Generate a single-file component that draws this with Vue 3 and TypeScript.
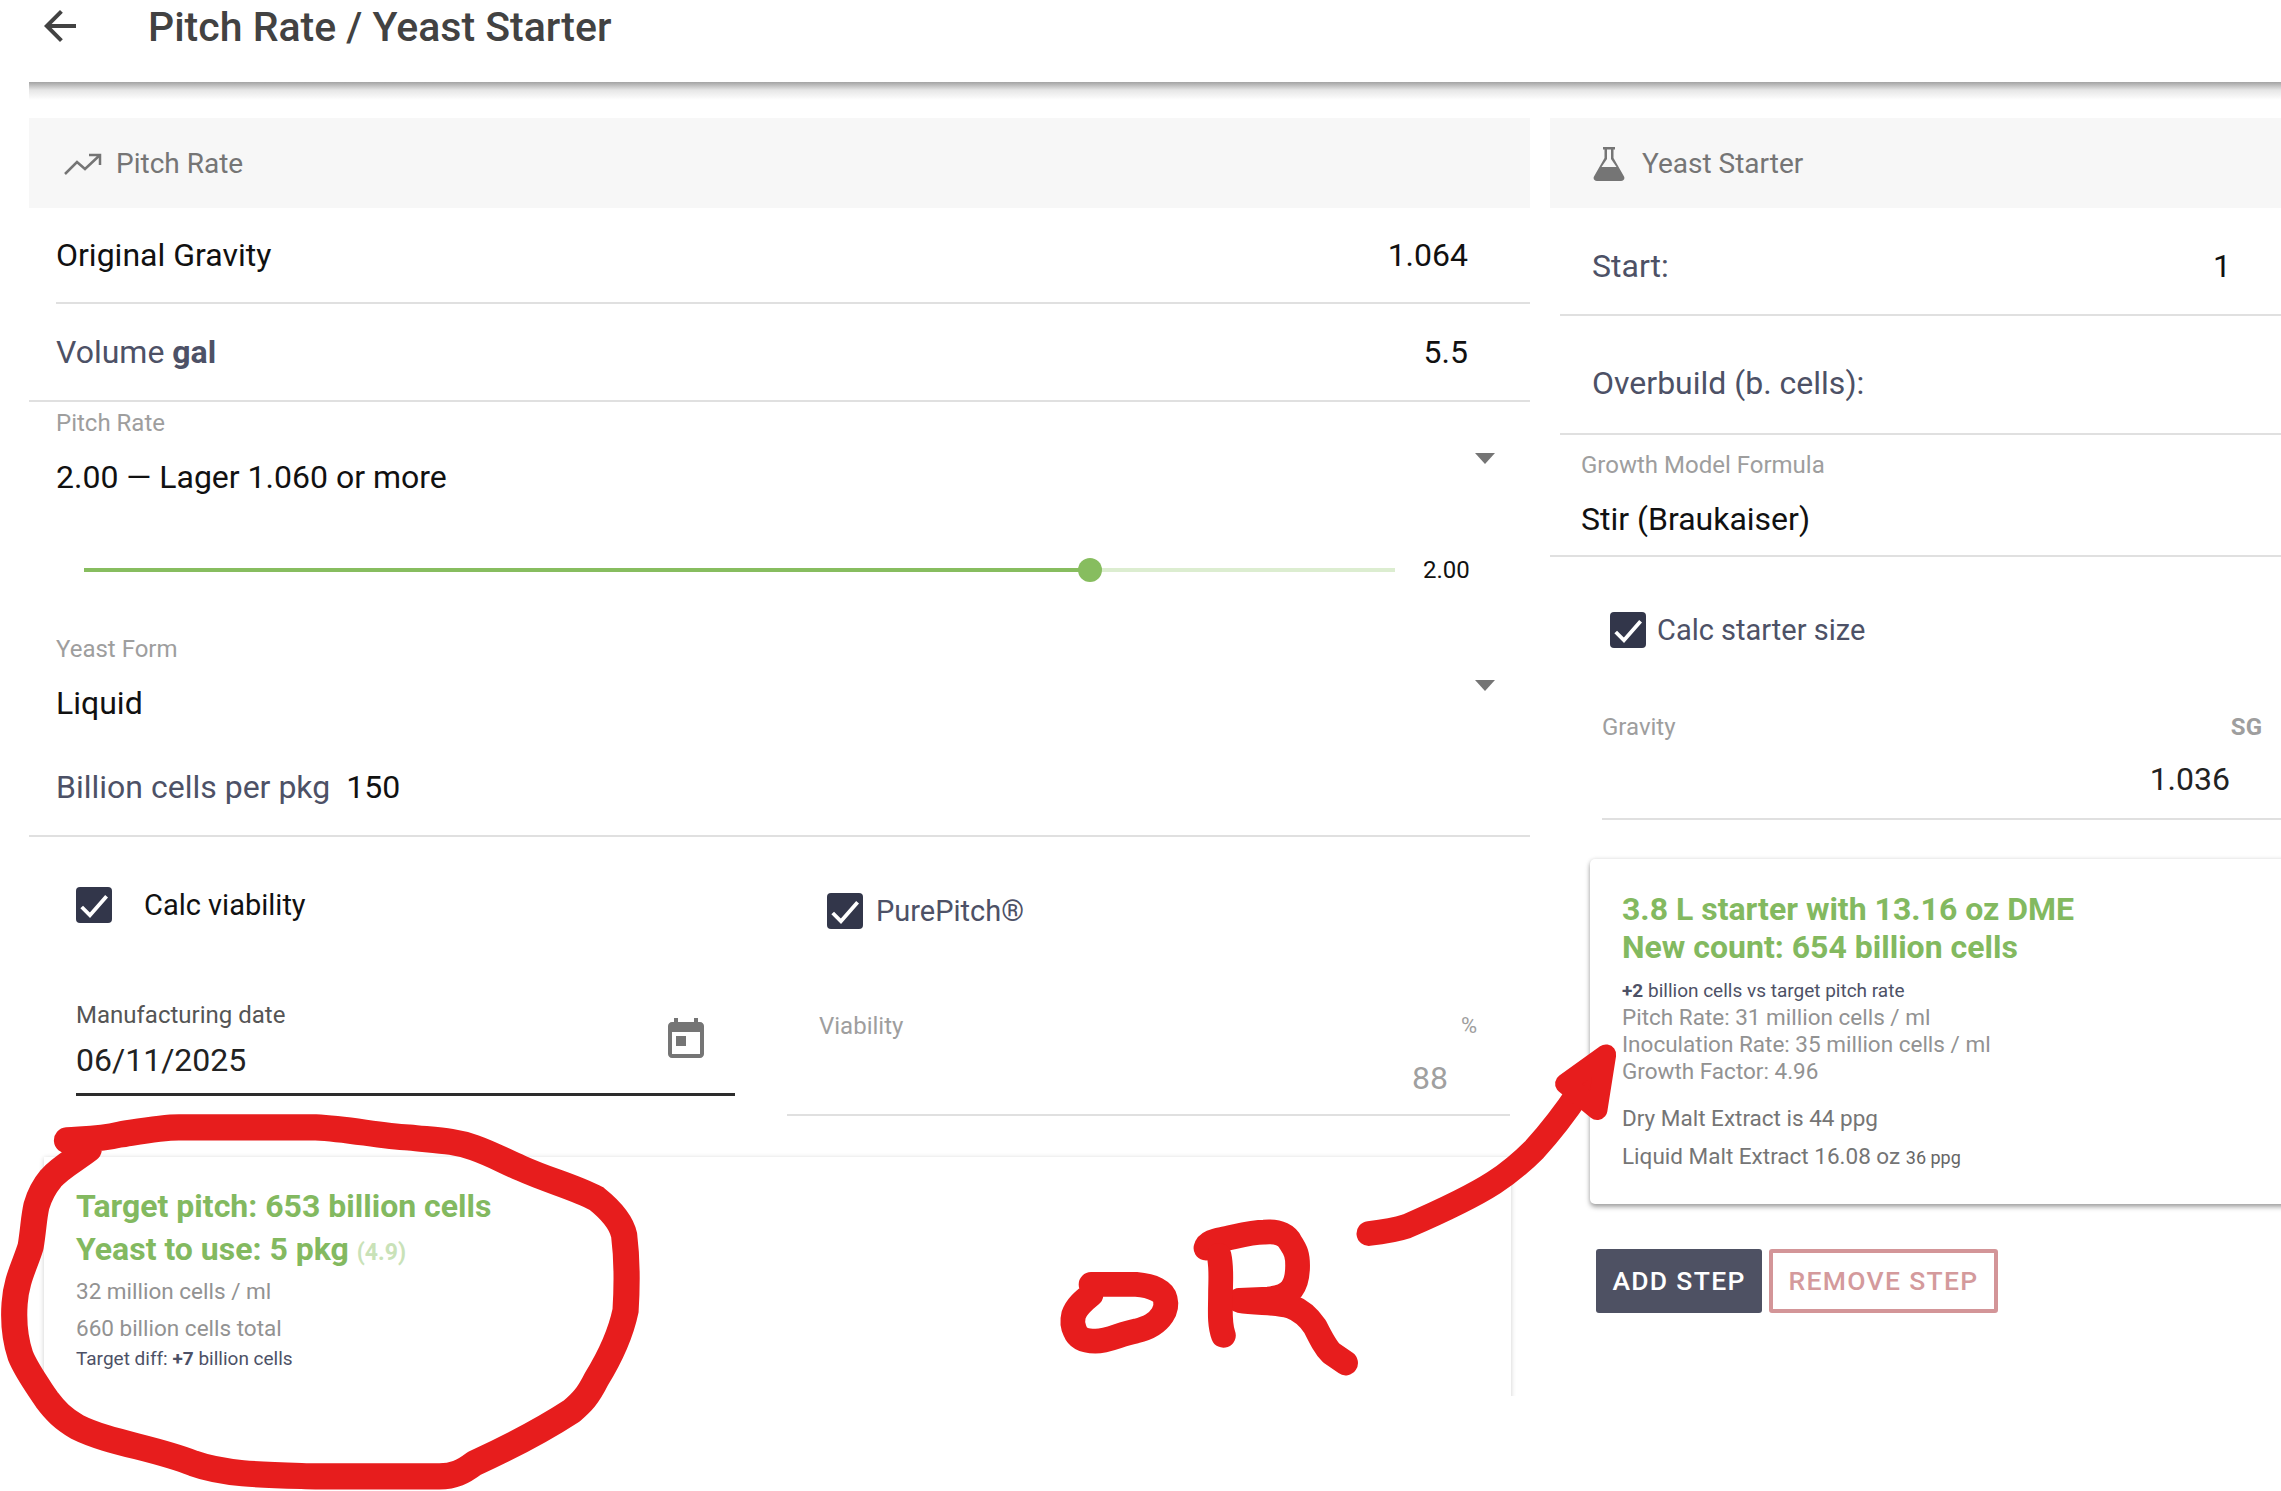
<template>
  <div class="page">
    <header class="toolbar">
      <svg class="back" viewBox="0 0 24 24"><path d="M20 11H7.83l5.59-5.59L12 4l-8 8 8 8 1.41-1.41L7.83 13H20v-2z" /></svg>
      <h1>Pitch Rate / Yeast Starter</h1>
    </header>
    <div class="toolbar-shadow"></div>

    <main class="columns">
      <section class="left">
        <div class="panel-head">
          <svg class="trend" viewBox="0 0 38 22" fill="none"><path d="M1 21l12-12 8 7L36 2M25 2h11v10" /></svg>
          <span>Pitch Rate</span>
        </div>

        <div class="row row-gravity">
          <span class="dark">Original Gravity</span>
          <span class="dark">1.064</span>
        </div>
        <div class="row row-volume">
          <span>Volume <b>gal</b></span>
          <span class="dark">5.5</span>
        </div>

        <div class="select pitch">
          <label class="small">Pitch Rate</label>
          <div class="select-value">2.00 — Lager 1.060 or more</div>
          <i class="caret"></i>
        </div>
        <div class="slider">
          <div class="track">
            <div class="track-on" :style="{ width: sliderPct + '%' }"></div>
            <div class="thumb" :style="{ left: sliderPct + '%' }"></div>
          </div>
          <span class="slider-val">2.00</span>
        </div>
        <div class="select form">
          <label class="small">Yeast Form</label>
          <div class="select-value">Liquid</div>
          <i class="caret"></i>
        </div>
        <div class="cells">Billion cells per pkg <span class="dark pkg">150</span></div>

        <div class="viability">
          <div class="cell">
            <div class="check-line calc">
              <span class="box"><svg viewBox="0 0 24 24"><path d="M3.800 13.300l5.500 5.600L20.400 6.200" /></svg></span>
              <span class="dark calc-label">Calc viability</span>
            </div>
            <div class="date">
              <label>Manufacturing date</label>
              <div class="date-value">06/11/2025</div>
              <svg class="calendar" viewBox="0 0 24 24"><path d="M19 4h-1V2h-2v2H8V2H6v2H5c-1.1 0-2 .9-2 2v14c0 1.1.9 2 2 2h14c1.1 0 2-.9 2-2V6c0-1.1-.9-2-2-2zm0 16H5V9h14v11zM7 11h5v5H7z" /></svg>
            </div>
          </div>
          <div class="cell">
            <div class="check-line pure">
              <span class="box"><svg viewBox="0 0 24 24"><path d="M3.800 13.300l5.500 5.600L20.400 6.200" /></svg></span>
              <span>PurePitch®</span>
            </div>
            <div class="via-field">
              <div class="via-labels"><span>Viability</span><span class="unit">%</span></div>
              <div class="via-value">88</div>
            </div>
          </div>
        </div>

        <div class="card result">
          <div class="green">Target pitch: 653 billion cells</div>
          <div class="green">Yeast to use: 5 pkg <small>(4.9)</small></div>
          <p class="grey first">32 million cells / ml</p>
          <p class="grey second">660 billion cells total</p>
          <p class="diff">Target diff: <b>+7</b> billion cells</p>
        </div>
      </section>

      <section class="right">
        <div class="panel-head">
          <svg class="flask" viewBox="0 0 32 34"><path d="M10 0h12v2.500h-1.500V11L31 29.500c1.200 2.400-.4 4.500-3 4.500H4c-2.600 0-4.200-2.100-3-4.500L11.500 11V2.500H10zM14 2.500V12L8.500 20h15L18 12V2.500z" fill-rule="evenodd" /></svg>
          <span>Yeast Starter</span>
        </div>

        <div class="row row-start"><span>Start:</span><span class="dark">1</span></div>
        <div class="row row-over"><span>Overbuild (b. cells):</span></div>
        <div class="formula">
          <label class="small">Growth Model Formula</label>
          <div class="select-value">Stir (Braukaiser)</div>
        </div>

        <div class="check-line starter">
          <span class="box"><svg viewBox="0 0 24 24"><path d="M3.800 13.300l5.500 5.600L20.400 6.200" /></svg></span>
          <span>Calc starter size</span>
        </div>

        <div class="sg-field">
          <div class="via-labels"><span>Gravity</span><b>SG</b></div>
          <div class="sg-value">1.036</div>
        </div>

        <div class="card starter-card">
          <div class="green">3.8 L starter with 13.16 oz DME</div>
          <div class="green">New count: 654 billion cells</div>
          <p class="vs"><b>+2</b> billion cells vs target pitch rate</p>
          <p v-for="line in rateLines" :key="line" class="grey rate">{{ line }}</p>
          <p class="malt dry">Dry Malt Extract is 44 ppg</p>
          <p class="malt">Liquid Malt Extract 16.08 oz <small>36 ppg</small></p>
        </div>

        <div class="actions">
          <button class="btn add">ADD STEP</button>
          <button class="btn remove">REMOVE STEP</button>
        </div>
      </section>
    </main>

    <!-- red marker scribbled over the screenshot -->
    <svg class="marker" viewBox="0 0 1568 1025" fill="none">
      <path stroke-width="18" d="M46 784 C60 783 70 783 82 780 C95 778 110 775 123 775 L217 775 C240 776 260 781 281 782 C300 784 312 784 326 789 C340 794 348 799 358 803 C378 812 395 816 410 824 C420 832 427 840 429 849 C431 865 431 885 430 901 C426 920 418 935 410 948 C404 960 400 964 393 970 C370 985 350 995 326 1006 C318 1012 312 1015 302 1015 L217 1015 C185 1014 155 1014 133 1006 C105 995 75 992 53 981 C43 975 38 970 32 962 C24 950 18 942 14 932 C10 920 9 910 10 896 C11 880 17 870 21 857 C23 845 23 838 25 829 C27 822 30 816 35 810 C42 802 52 797 61 790" />
      <path stroke-width="17" d="M750 883 L781 883 C793 884 800 888 801 893 C802 897 801 901 799 904 C795 910 790 913 781 915 C770 917 762 922 753 922 C745 922 741 920 739 915 C737 911 737 908 738 904 C740 898 745 894 750 890" />
      <path stroke-width="17" d="M829 858 C830 854 835 853 840 852 C850 850 860 847 869 847 C880 846 885 850 887 854 C891 860 892 863 892 870 C892 877 891 882 888 886 C885 890 880 892 872 893 L852 894 C865 896 878 895 887 898 C895 901 900 906 904 912 C908 920 911 926 915 930 L925 937" />
      <path stroke-width="17" d="M838 863 C840 872 839 880 839 890 C839 900 838 910 841 918" />
      <path stroke-width="17" d="M941 848 C950 847 958 846 967 843 C990 833 1010 824 1027 813 C1038 806 1046 799 1055 790 C1066 778 1076 765 1086 750 L1097 733" />
      <path class="arrow-head" stroke-width="14" d="M1104 725 L1076 745 L1098 763 Z" />
    </svg>
  </div>
</template>

<script setup lang="ts">
const sliderPct = 76.7

const rateLines: string[] = [
  'Pitch Rate: 31 million cells / ml',
  'Inoculation Rate: 35 million cells / ml',
  'Growth Factor: 4.96',
]
</script>

<style>
html,
body {
  margin: 0;
  background: #fff;
}
</style>

<style scoped>
.page {
  position: relative;
  width: 2281px;
  height: 1491px;
  box-sizing: border-box;
  padding-left: 29px;
  overflow: hidden;
  background: #fff;
  font-family: Roboto, "Liberation Sans", sans-serif;
  font-size: 32px;
  color: #4d5166;
}

.toolbar {
  display: flex;
  align-items: flex-start;
  height: 82px;
  color: #424242;
}
.back {
  width: 48px;
  height: 48px;
  margin: 2px 0 0 7px;
  fill: #424242;
}
h1 {
  margin: 1px 0 0 64px;
  font-size: 41px;
  font-weight: 500;
  line-height: 52px;
}
.toolbar-shadow {
  height: 18px;
  background: linear-gradient(#a3a3a3, #e6e6e6 45%, #fff);
}

.columns {
  display: flex;
  gap: 20px;
  margin-top: 18px;
  height: 1278px;
}
.left {
  flex: 0 0 1501px;
  overflow: hidden;
}
.right {
  flex: 1;
  min-width: 0;
}

.panel-head {
  display: flex;
  align-items: center;
  height: 90px;
  background: #f7f7f7;
  color: #757575;
  font-size: 28px;
}
.trend {
  width: 38px;
  height: 22px;
  margin: 2px 14px 0 35px;
  stroke: #757575;
  stroke-width: 2.5;
}
.flask {
  flex: none;
  width: 32px;
  height: 34px;
  margin: 2px 17px 0 43px;
  fill: #757575;
}

.dark {
  color: #111;
}
b {
  font-weight: 700;
}

.row {
  display: flex;
  align-items: center;
  justify-content: space-between;
  box-sizing: border-box;
  border-bottom: 2px solid #e0e0e0;
}
.row-gravity {
  height: 96px;
  margin-left: 27px;
  padding: 0 62px 1px 0;
}
.row-volume {
  height: 98px;
  padding: 0 62px 0 27px;
}

.small {
  display: block;
  color: #9e9e9e;
  font-size: 24px;
  line-height: 40px;
}
.select {
  position: relative;
  padding-left: 27px;
}
.pitch {
  padding-top: 1px;
}
.select-value {
  color: #111;
  font-size: 32px;
  line-height: 68px;
}
.caret {
  position: absolute;
  top: 51px;
  right: 35px;
  border-left: 10px solid transparent;
  border-right: 10px solid transparent;
  border-top: 11px solid #757575;
}

.slider {
  display: flex;
  align-items: center;
  height: 118px;
  padding-left: 55px;
}
.track {
  position: relative;
  width: 1311px;
  height: 4px;
  background: #dcedd0;
}
.track-on {
  height: 100%;
  background: #87bd5f;
}
.thumb {
  position: absolute;
  top: -10px;
  width: 24px;
  height: 24px;
  margin-left: -12px;
  border-radius: 50%;
  background: #87bd5f;
}
.slider-val {
  margin-left: 28px;
  color: #111;
  font-size: 24px;
}

.cells {
  box-sizing: border-box;
  height: 100px;
  padding: 32px 0 0 27px;
  border-bottom: 2px solid #e0e0e0;
  line-height: 36px;
}
.pkg {
  margin-left: 8px;
}

.viability {
  display: grid;
  grid-template-columns: 758px 723px;
}
.check-line {
  display: flex;
  align-items: center;
}
.box {
  display: flex;
  flex: none;
  width: 36px;
  height: 36px;
  border-radius: 4px;
  background: #32364a;
}
.box svg {
  fill: none;
  stroke: #fff;
  stroke-width: 2.500;
}
.calc {
  height: 36px;
  margin: 50px 0 0 47px;
}
.calc-label {
  margin-left: 32px;
  font-size: 29px;
}
.pure {
  height: 36px;
  margin: 56px 0 0 40px;
  gap: 13px;
  font-size: 29px;
}

.date {
  position: relative;
  box-sizing: border-box;
  width: 659px;
  height: 130px;
  margin: 43px 0 0 47px;
  padding-top: 31px;
  border-bottom: 3px solid #2c2c2c;
}
.date label {
  display: block;
  color: #555;
  font-size: 24px;
  line-height: 36px;
}
.date-value {
  color: #222;
  font-size: 32px;
  line-height: 50px;
  margin-top: 2px;
}
.calendar {
  position: absolute;
  top: 48px;
  right: 25px;
  width: 48px;
  height: 48px;
  fill: #757575;
}

.via-field {
  box-sizing: border-box;
  height: 143px;
  margin-top: 44px;
  padding-right: 33px;
  border-bottom: 2px solid #e0e0e0;
}
.via-labels {
  display: flex;
  justify-content: space-between;
  color: #9e9e9e;
  font-size: 24px;
  line-height: 36px;
  padding: 35px 0 0 32px;
}
.unit {
  font-size: 22px;
}
.via-value {
  margin: 14px 29px 0 0;
  color: #a0a0a0;
  font-size: 32px;
  line-height: 40px;
  text-align: right;
}

.card {
  background: #fff;
  box-shadow: 0 1px 5px rgba(0, 0, 0, 0.2);
  box-sizing: border-box;
}
.card p {
  margin: 0;
}
.green {
  color: #83b960;
  font-weight: 700;
  font-size: 32px;
  line-height: 38px;
}
.grey {
  color: #929292;
}
.result {
  position: relative;
  width: 1467px;
  height: 300px;
  margin: 41px 0 0 15px;
  padding: 30px 0 0 32px;
}
.result .green + .green {
  margin-top: 5px;
}
.result small {
  color: #c9e2b8;
  font-size: 23px;
}
.first {
  font-size: 22.500px;
  line-height: 38px;
}
.second {
  font-size: 22.500px;
  line-height: 36px;
}
.diff {
  font-size: 19px;
  line-height: 26px;
}

.row-start {
  height: 108px;
  margin-left: 10px;
  padding: 10px 50px 0 32px;
}
.row-over {
  height: 119px;
  margin-left: 10px;
  padding: 17px 0 0 32px;
}
.formula {
  box-sizing: border-box;
  height: 122px;
  padding: 10px 0 0 34px;
  border-bottom: 2px solid #e0e0e0;
}
.formula .small,
.formula .select-value {
  margin-left: -3px;
}
.formula .select-value {
  line-height: 68px;
}
.starter {
  height: 36px;
  margin: 55px 0 0 60px;
  gap: 11px;
  font-size: 29px;
}
.sg-field {
  box-sizing: border-box;
  height: 136px;
  margin: 36px 0 0 52px;
  padding-right: 19px;
  border-bottom: 2px solid #e0e0e0;
}
.sg-field .via-labels {
  padding: 25px 0 0;
}
.sg-field b {
  color: #9e9e9e;
  font-weight: 700;
}
.sg-value {
  margin: 12px 32px 0 0;
  color: #222;
  font-size: 32px;
  line-height: 44px;
  text-align: right;
}

.starter-card {
  width: 760px;
  height: 345px;
  margin: 39px 0 0 40px;
  padding: 31px 0 0 32px;
  border-radius: 5px;
  box-shadow: 0 3px 5px rgba(0, 0, 0, 0.35), 0 0 4px rgba(0, 0, 0, 0.1);
}
.vs {
  margin-top: 12px !important;
  color: #4d5166;
  font-size: 19px;
  line-height: 26px;
}
.rate {
  font-size: 22.500px;
  line-height: 27px;
}
.malt {
  color: #757575;
  font-size: 22.500px;
  line-height: 38px;
}
.dry {
  margin-top: 14px !important;
}
.malt small {
  color: #666;
  font-size: 18px;
}

.actions {
  display: flex;
  gap: 7px;
  margin: 45px 0 0 46px;
}
.btn {
  box-sizing: border-box;
  height: 64px;
  padding-bottom: 2px;
  border-radius: 3px;
  font-family: inherit;
  font-size: 26.500px;
  font-weight: 500;
  letter-spacing: 1.3px;
}
.add {
  width: 166px;
  border: none;
  background: #4e5163;
  color: #fff;
}
.remove {
  width: 229px;
  border: 4px solid #d39598;
  background: #fff;
  color: #d49a9c;
}

.marker {
  position: absolute;
  top: 0;
  left: 0;
  width: 2281px;
  height: 1491px;
  pointer-events: none;
  stroke: #e71d1d;
  stroke-linecap: round;
  stroke-linejoin: round;
}
.arrow-head {
  fill: #e71d1d;
}
</style>
